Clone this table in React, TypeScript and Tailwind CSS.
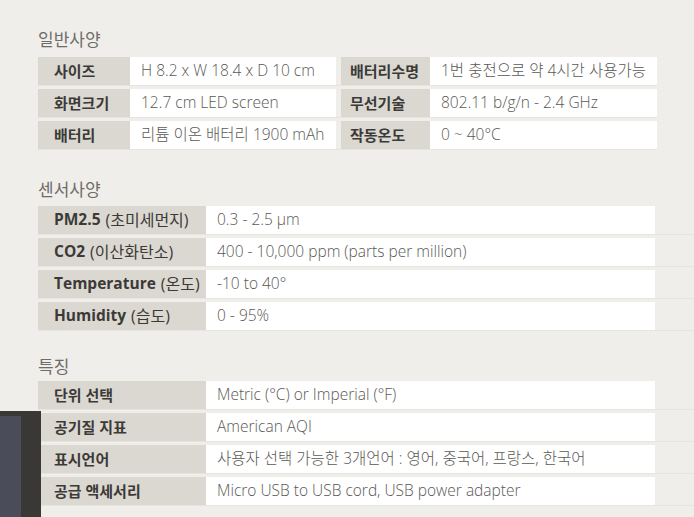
import React from "react";

const font = { fontFamily: '"Open Sans", "Noto Sans CJK KR", sans-serif' };

function Title({ children }: { children: React.ReactNode }) {
  return (
    <div className="h-[24px] leading-[24px] text-[17px] font-normal text-[#6e6c69] pl-[38px]" style={{ fontFamily: '"Noto Sans CJK KR", sans-serif' }}>
      {children}
    </div>
  );
}

function Label({ children, w, pl = "pl-[16px]" }: { children: React.ReactNode; w: string; pl?: string }) {
  return (
    <div className={`${w} ${pl} h-full flex items-center bg-[#dbd8d1] text-[15px] font-bold text-[#3b3a38] whitespace-nowrap`} style={{ fontFamily: '"Open Sans", "Noto Sans CJK KR", sans-serif' }}>
      {children}
    </div>
  );
}

function Value({ children, w }: { children: React.ReactNode; w: string }) {
  return (
    <div className={`${w} h-full flex items-center bg-white pl-[11px] text-[15.5px] font-light text-[#5a5855] whitespace-nowrap`} style={font}>
      {children}
    </div>
  );
}

function Row({ children }: { children: React.ReactNode }) {
  return <div className="flex h-[29px] border-b border-[#e6e4df]">{children}</div>;
}

const general: [string, string, string, string][] = [
  ["사이즈", "H 8.2 x W 18.4 x D 10 cm", "배터리수명", "1번 충전으로 약 4시간 사용가능"],
  ["화면크기", "12.7 cm LED screen", "무선기술", "802.11 b/g/n - 2.4 GHz"],
  ["배터리", "리튬 이온 배터리 1900 mAh", "작동온도", "0 ~ 40°C"],
];

const sensors: [string, string, string][] = [
  ["PM2.5", "(초미세먼지)", "0.3 - 2.5 µm"],
  ["CO2", "(이산화탄소)", "400 - 10,000 ppm (parts per million)"],
  ["Temperature", "(온도)", "-10 to 40°"],
  ["Humidity", "(습도)", "0 - 95%"],
];

const features: [string, string][] = [
  ["단위 선택", "Metric (°C) or Imperial (°F)"],
  ["공기질 지표", "American AQI"],
  ["표시언어", "사용자 선택 가능한 3개언어 : 영어, 중국어, 프랑스, 한국어"],
  ["공급 액세서리", "Micro USB to USB cord, USB power adapter"],
];

export default function App() {
  return (
    <div className="relative w-[694px] h-[517px] overflow-hidden bg-[#f0eeea]">
      <div className="pt-[27px]">
        <Title>일반사양</Title>
        <div className="mt-[6px] pl-[38px] flex flex-col gap-[3px]">
          {general.map((r) => (
            <div key={r[0]} className="flex h-[29px] border-b border-[#e6e4df] w-[619px]">
              <Label w="w-[92px]">{r[0]}</Label>
              <Value w="w-[206px]">{r[1]}</Value>
              <div className="w-[5px]" />
              <Label w="w-[89px]" pl="pl-[9px]">{r[2]}</Label>
              <Value w="w-[227px]">{r[3]}</Value>
            </div>
          ))}
        </div>

        <div className="mt-[27px]">
          <Title>센서사양</Title>
        </div>
        <div className="mt-[5px] pl-[38px] flex flex-col gap-[3px]">
          {sensors.map((r) => (
            <Row key={r[0]}>
              <Label w="w-[168px]">
                <span className="text-[15.5px]">{r[0]}</span>
                <span className="font-normal text-[16px] ml-[5px]">{r[1]}</span>
              </Label>
              <Value w="w-[449px]">{r[2]}</Value>
            </Row>
          ))}
        </div>

        <div className="mt-[23px]">
          <Title>특징</Title>
        </div>
        <div className="mt-[3px] pl-[38px] flex flex-col gap-[3px]">
          {features.map((r) => (
            <Row key={r[0]}>
              <Label w="w-[168px]">{r[0]}</Label>
              <Value w="w-[449px]">{r[1]}</Value>
            </Row>
          ))}
        </div>
      </div>

      <div className="absolute left-0 top-[411px] w-[41px] h-[106px] bg-[#3a3835]">
        <div className="mt-[5px] w-[21px] h-[101px] bg-[#4a4c59]" />
      </div>
    </div>
  );
}
